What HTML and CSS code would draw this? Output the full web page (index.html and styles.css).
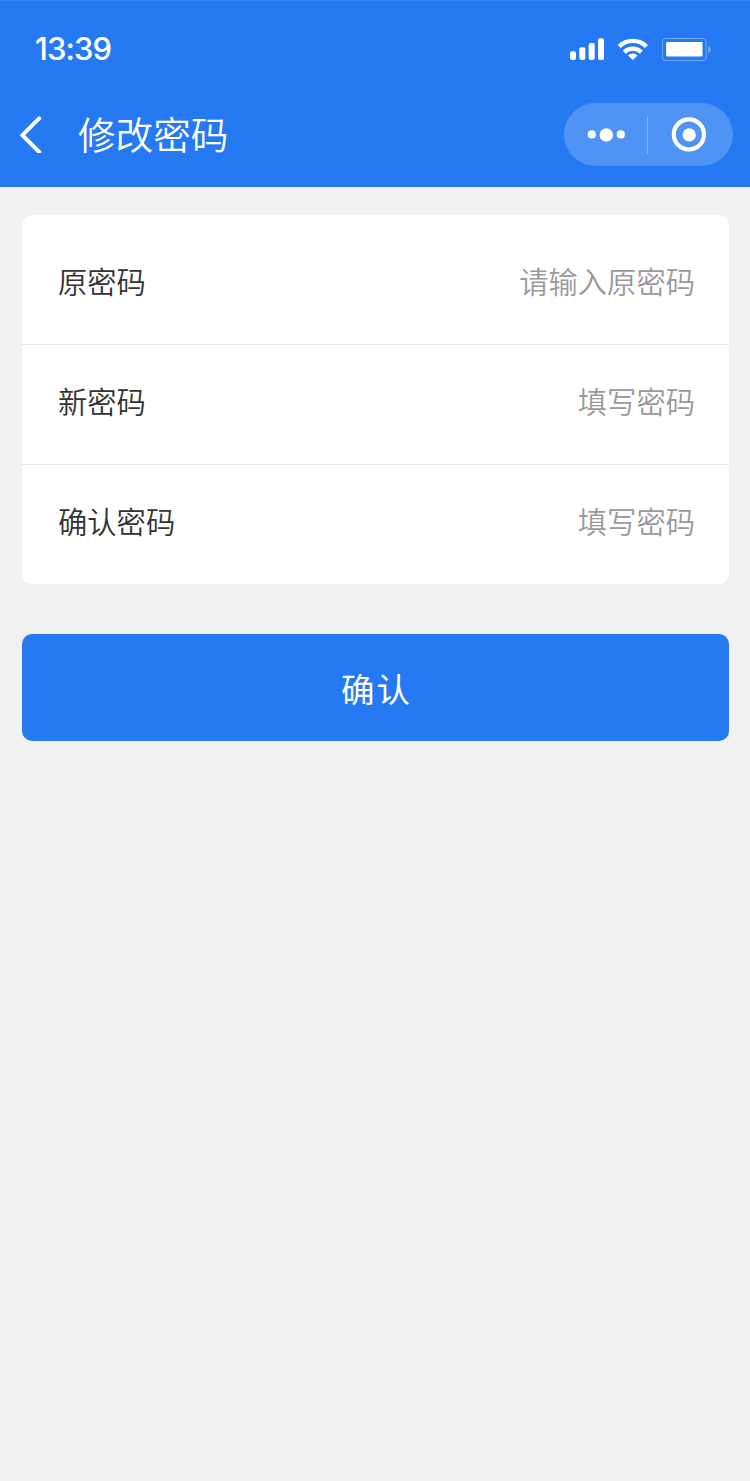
FILE: index.html
```html
<!DOCTYPE html>
<html lang="zh-CN">
<head>
<meta charset="UTF-8">
<meta name="viewport" content="width=device-width, initial-scale=1.0">
<title>修改密码</title>
<link rel="stylesheet" href="styles.css">
</head>
<body>
<header class="header">
 <div class="status-bar">
  <span class="time">13:39</span>
  <svg class="status-icons" width="142" height="24" viewBox="0 0 142 24" fill="#fff">
   <rect x="0" y="13.3" width="6" height="8.7" rx="2"/>
   <rect x="9.3" y="9.3" width="6" height="12.7" rx="2"/>
   <rect x="18.7" y="5" width="6" height="17" rx="2"/>
   <rect x="28" y="0.3" width="6" height="21.7" rx="2"/>
   <g fill="none" stroke="#fff" stroke-width="4.4">
    <path d="M49.2 8.5a19.3 19.3 0 0 1 27.2 0"/>
    <path d="M54.3 14.2a12 12 0 0 1 17 0"/>
   </g>
   <path d="M62.8 22l-4.8-4.6a6.8 6.8 0 0 1 9.6 0z"/>
   <rect x="92.6" y="0.5" width="43.5" height="22" rx="2.5" fill="none" stroke="#fff" stroke-opacity=".35"/>
   <rect x="96.1" y="4" width="36.4" height="14.6" rx="1"/>
   <path d="M138.1 7.7q2.6 1 2.6 3.8t-2.6 3.8z" fill-opacity=".4"/>
  </svg>
 </div>
 <nav class="navbar">
  <a class="back" href="#" aria-label="返回">
   <svg width="24" height="38" viewBox="0 0 24 38" fill="none" stroke="#fff" stroke-width="4" stroke-linecap="round"><path d="M21.2 3.4L4.4 20.2L21.2 37"/></svg>
  </a>
  <h1 class="title">修改密码</h1>
  <div class="capsule">
   <svg width="168" height="63" viewBox="0 0 168 63" fill="#fff">
    <circle cx="27.8" cy="31.4" r="4.1"/>
    <circle cx="42.3" cy="31.9" r="6.7"/>
    <circle cx="56.8" cy="31.4" r="4.1"/>
    <path d="M83.5 14v37" stroke="#fff" stroke-opacity=".3" stroke-width="1"/>
    <circle cx="124.9" cy="31.4" r="15.1" fill="none" stroke="#fff" stroke-width="4.2"/>
    <circle cx="125.2" cy="31.9" r="6.6"/>
   </svg>
  </div>
 </nav>
</header>
<main>
<form>
 <div class="card">
  <label class="row">
   <span class="label">原密码</span>
   <input class="field" type="password" placeholder="请输入原密码">
  </label>
  <label class="row">
   <span class="label">新密码</span>
   <input class="field" type="password" placeholder="填写密码">
  </label>
  <label class="row">
   <span class="label">确认密码</span>
   <input class="field" type="password" placeholder="填写密码">
  </label>
 </div>
 <button class="submit" type="button">确认</button>
</form>
</main>
</body>
</html>
```

FILE: styles.css
```css
*{box-sizing:border-box}
body{margin:0;min-height:100vh;background:#f1f1f1;color:#333;font-family:"Noto Sans CJK SC",sans-serif;font-weight:350}
.header{height:187px;background:#2579f3;color:#fff;border-top:1px solid #3984f4}
.status-bar{display:flex;justify-content:space-between;align-items:center;height:82px;padding:15px 38px 0 35px}
.time{font-family:Inter,sans-serif;font-size:31px;font-weight:500;line-height:36px;letter-spacing:-.9px;margin-top:-2px}
.status-icons{display:block}
.navbar{display:flex;align-items:center;height:104px;padding:0 17px 2px 18px}
.back{display:flex;width:24px}
.title{flex:1;margin:0 0 2px 36px;font-size:37.6px;font-weight:350;line-height:54px}
.capsule{width:169px;height:63px;border-radius:32px;background:#4f93f5}
.capsule svg{display:block}
main{padding:28px 21px 0 22px}
.card{padding-top:10px;background:#fff;border-radius:10px}
.row{display:flex;justify-content:space-between;align-items:center;height:120px;padding:0 34px 9px 36px;border-bottom:1px solid #e5e5e5}
.row:last-child{height:119px;border-bottom:0}
.label,.field{font-size:29.3px;line-height:44px}
.field{width:400px;height:44px;padding:0;border:0;outline:0;background:none;color:#333;font-family:inherit;font-weight:inherit;text-align:right}
.field::placeholder{color:#999;opacity:1}
.submit{display:block;width:100%;height:107px;margin-top:50px;padding:0 0 0 2px;border:0;border-radius:10px;background:#2579f3;color:#fff;font-family:inherit;font-size:33.5px;letter-spacing:2px}
```
